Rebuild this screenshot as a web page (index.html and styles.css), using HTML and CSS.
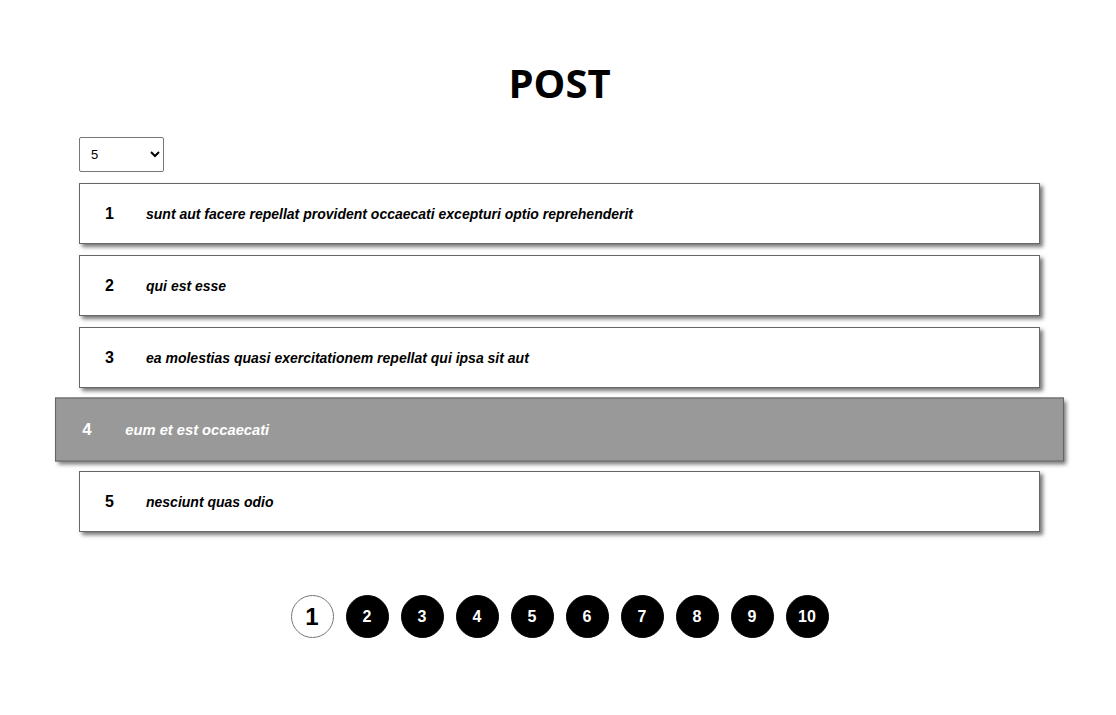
FILE: index.html
```html
<!DOCTYPE html>
<html>
<head>
<meta charset="utf-8">
<link rel="stylesheet" href="styles.css">
</head>
<body>
<div class="page">
  <h1 class="title">POST</h1>
  <div class="list">
    <select class="limit">
      <option>5</option>
      <option>10</option>
      <option>20</option>
    </select>
    <div class="post"><span class="num">1</span><span class="text">sunt aut facere repellat provident occaecati excepturi optio reprehenderit</span></div>
    <div class="post"><span class="num">2</span><span class="text">qui est esse</span></div>
    <div class="post"><span class="num">3</span><span class="text">ea molestias quasi exercitationem repellat qui ipsa sit aut</span></div>
    <div class="post post-active"><span class="num">4</span><span class="text">eum et est occaecati</span></div>
    <div class="post"><span class="num">5</span><span class="text">nesciunt quas odio</span></div>
  </div>
  <div class="pages">
    <span class="page-btn current">1</span>
    <span class="page-btn">2</span>
    <span class="page-btn">3</span>
    <span class="page-btn">4</span>
    <span class="page-btn">5</span>
    <span class="page-btn">6</span>
    <span class="page-btn">7</span>
    <span class="page-btn">8</span>
    <span class="page-btn">9</span>
    <span class="page-btn">10</span>
  </div>
</div>
</body>
</html>
```
FILE: styles.css
```css
html, body {
  margin: 0;
  padding: 0;
  background: #fff;
}
body {
  padding-left: 3px;
  font-family: "Liberation Sans", Arial, sans-serif;
  color: #000;
}
.page {
  display: flex;
  flex-direction: column;
  align-items: center;
}
.title {
  margin: 55px 0 27px;
  font-family: "Open Sans", sans-serif;
  font-weight: 700;
  font-size: 40px;
  line-height: 55px;
}
.list {
  width: 961px;
  display: flex;
  flex-direction: column;
  gap: 11px;
}
.limit {
  width: 85px;
  height: 35px;
  font-family: "Liberation Sans", Arial, sans-serif;
  font-size: 13px;
  padding: 0 0 0 7px;
  border: 1px solid #767676;
  border-radius: 2px;
  background: #fff;
  color: #000;
}
.post {
  box-sizing: border-box;
  height: 61px;
  display: flex;
  align-items: center;
  padding: 0 25px;
  border: 1px solid #666;
  background: #fff;
  box-shadow: 3px 3px 4px #777;
}
.post-active {
  background: #999;
  color: #fff;
  transform: scale(1.05);
}
.num {
  width: 41px;
  font-weight: 700;
  font-size: 16px;
}
.text {
  font-weight: 700;
  font-style: italic;
  font-size: 14px;
}
.pages {
  margin-top: 63px;
  display: flex;
  gap: 12px;
}
.page-btn {
  box-sizing: border-box;
  width: 43px;
  height: 43px;
  border-radius: 50%;
  background: #000;
  border: 1px solid #000;
  color: #fff;
  font-weight: 700;
  font-size: 16px;
  display: flex;
  align-items: center;
  justify-content: center;
}
.page-btn.current {
  background: #fff;
  color: #000;
  border-color: #777;
  font-size: 24px;
}
```
